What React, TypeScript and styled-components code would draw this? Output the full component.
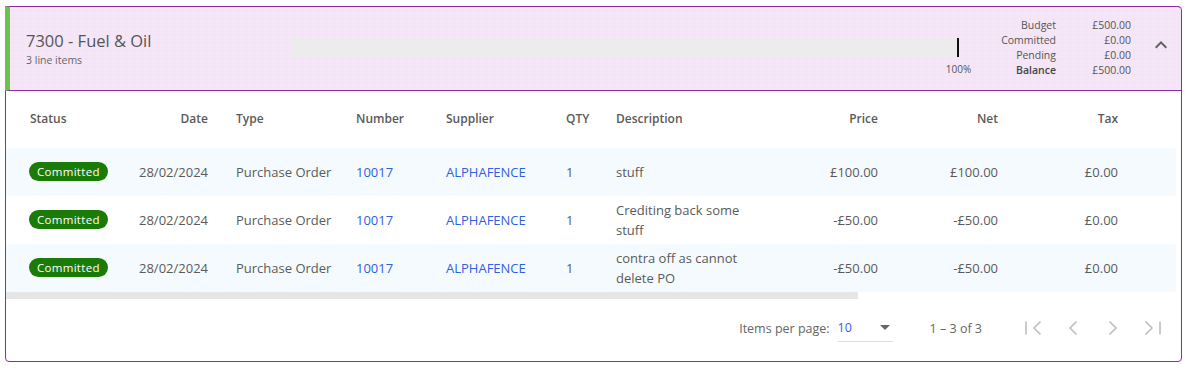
import { createGlobalStyle, styled } from 'styled-components';

const GlobalStyle = createGlobalStyle`
  body {
    margin: 0;
    background: #ffffff;
    font-family: 'Open Sans', 'Noto Sans', sans-serif;
    color: #555555;
  }
`;

type Line = {
  status: string;
  date: string;
  type: string;
  number: string;
  supplier: string;
  qty: number;
  description: string;
  price: string;
  net: string;
  tax: string;
};

const LINES: Line[] = [
  {
    status: 'Committed',
    date: '28/02/2024',
    type: 'Purchase Order',
    number: '10017',
    supplier: 'ALPHAFENCE',
    qty: 1,
    description: 'stuff',
    price: '£100.00',
    net: '£100.00',
    tax: '£0.00',
  },
  {
    status: 'Committed',
    date: '28/02/2024',
    type: 'Purchase Order',
    number: '10017',
    supplier: 'ALPHAFENCE',
    qty: 1,
    description: 'Crediting back some stuff',
    price: '-£50.00',
    net: '-£50.00',
    tax: '£0.00',
  },
  {
    status: 'Committed',
    date: '28/02/2024',
    type: 'Purchase Order',
    number: '10017',
    supplier: 'ALPHAFENCE',
    qty: 1,
    description: 'contra off as cannot delete PO',
    price: '-£50.00',
    net: '-£50.00',
    tax: '£0.00',
  },
];

const TOTALS = [
  { label: 'Budget', value: '£500.00' },
  { label: 'Committed', value: '£0.00' },
  { label: 'Pending', value: '£0.00' },
  { label: 'Balance', value: '£500.00', strong: true },
];

const USED_PERCENT = 100;

export default function App() {
  return (
    <>
      <GlobalStyle />
      <StyledPage>
        <StyledCard>
          <StyledHeader>
            <StyledTitleBlock>
              <StyledTitle>7300 - Fuel &amp; Oil</StyledTitle>
              <StyledSubtitle>{LINES.length} line items</StyledSubtitle>
            </StyledTitleBlock>
            <StyledProgress>
              <StyledTrack>
                <StyledMarker style={{ left: `${USED_PERCENT}%` }} />
                <StyledPercent style={{ left: `${USED_PERCENT}%` }}>
                  {USED_PERCENT}%
                </StyledPercent>
              </StyledTrack>
            </StyledProgress>
            <StyledTotals>
              {TOTALS.map((t) => (
                <StyledTotalRow key={t.label} $strong={!!t.strong}>
                  <span>{t.label}</span>
                  <span>{t.value}</span>
                </StyledTotalRow>
              ))}
            </StyledTotals>
            <StyledToggle aria-label="Collapse">
              <svg width="24" height="24" viewBox="0 0 24 24">
                <path d="M12 8l-6 6 1.41 1.41L12 10.83l4.59 4.58L18 14z" fill="#5f5f5f" />
              </svg>
            </StyledToggle>
          </StyledHeader>

          <StyledTableScroll>
            <StyledHeadRow>
              <StyledCell>Status</StyledCell>
              <StyledCell $align="right">Date</StyledCell>
              <StyledCell>Type</StyledCell>
              <StyledCell>Number</StyledCell>
              <StyledCell>Supplier</StyledCell>
              <StyledCell>QTY</StyledCell>
              <StyledCell>Description</StyledCell>
              <StyledCell $align="right">Price</StyledCell>
              <StyledCell $align="right">Net</StyledCell>
              <StyledCell $align="right">Tax</StyledCell>
            </StyledHeadRow>
            {LINES.map((line, i) => (
              <StyledRow key={i} $striped={i % 2 === 0}>
                <StyledCell>
                  <StyledBadge>{line.status}</StyledBadge>
                </StyledCell>
                <StyledCell $align="right">{line.date}</StyledCell>
                <StyledCell>{line.type}</StyledCell>
                <StyledCell>
                  <StyledLink>{line.number}</StyledLink>
                </StyledCell>
                <StyledCell>
                  <StyledLink>{line.supplier}</StyledLink>
                </StyledCell>
                <StyledCell>{line.qty}</StyledCell>
                <StyledDescription>{line.description}</StyledDescription>
                <StyledCell $align="right">{line.price}</StyledCell>
                <StyledCell $align="right">{line.net}</StyledCell>
                <StyledCell $align="right">{line.tax}</StyledCell>
              </StyledRow>
            ))}
          </StyledTableScroll>
          <StyledScrollbar>
            <StyledScrollThumb />
          </StyledScrollbar>

          <StyledPaginator>
            <StyledPagerLabel>Items per page:</StyledPagerLabel>
            <StyledSelect>
              <span>10</span>
              <StyledCaret />
            </StyledSelect>
            <StyledRange>1 – 3 of 3</StyledRange>
            <StyledPagerButtons>
              <StyledPagerButton aria-label="First page" disabled>
                <svg width="24" height="24" viewBox="0 0 24 24">
                  <path d="M5 5.5v13M19.5 5.5L13 12l6.5 6.5" />
                </svg>
              </StyledPagerButton>
              <StyledPagerButton aria-label="Previous page" disabled>
                <svg width="24" height="24" viewBox="0 0 24 24">
                  <path d="M15.5 5.5L9 12l6.5 6.5" />
                </svg>
              </StyledPagerButton>
              <StyledPagerButton aria-label="Next page" disabled>
                <svg width="24" height="24" viewBox="0 0 24 24">
                  <path d="M8.5 5.5L15 12l-6.5 6.5" />
                </svg>
              </StyledPagerButton>
              <StyledPagerButton aria-label="Last page" disabled>
                <svg width="24" height="24" viewBox="0 0 24 24">
                  <path d="M4.5 5.5L11 12l-6.5 6.5M19 5.5v13" />
                </svg>
              </StyledPagerButton>
            </StyledPagerButtons>
          </StyledPaginator>
        </StyledCard>
      </StyledPage>
    </>
  );
}

const PURPLE = '#8e2aa8';
const COLUMNS = '90px 116px 120px 90px 120px 50px 150px 112px 120px 120px';

const StyledPage = styled.div`
  padding: 6px 6px 6px 5px;
`;

const StyledCard = styled.div`
  border: 1px solid ${PURPLE};
  border-radius: 0 4px 4px 4px;
  background: #ffffff;
`;

const StyledHeader = styled.div`
  display: flex;
  align-items: center;
  height: 83px;
  margin: -1px 0 0 -1px;
  border-top: 1px solid ${PURPLE};
  border-bottom: 1px solid ${PURPLE};
  border-left: 5px solid #6cc24a;
  border-top-right-radius: 4px;
  background-color: #f4e6f6;
  background-image: radial-gradient(circle, #e9d6ed 0.6px, transparent 0.8px);
  background-size: 8px 8px;
  padding-left: 16px;
  padding-right: 8px;
`;

const StyledTitleBlock = styled.div`
  flex: 0 0 265px;
  display: flex;
  flex-direction: column;
`;

const StyledTitle = styled.div`
  font-size: 16.5px;
  line-height: 22px;
  color: #555555;
`;

const StyledSubtitle = styled.div`
  font-size: 10.5px;
  line-height: 16px;
  color: #666666;
`;

const StyledProgress = styled.div`
  flex: 1;
  align-self: flex-start;
  margin-top: 31px;
  padding-right: 7px;
`;

const StyledTrack = styled.div`
  position: relative;
  height: 19px;
  background: #ececec;
`;

const StyledMarker = styled.div`
  position: absolute;
  top: 0;
  bottom: 0;
  width: 2px;
  background: #111111;
`;

const StyledPercent = styled.div`
  position: absolute;
  top: 24px;
  transform: translateX(-45%);
  font-size: 10px;
  line-height: 14px;
  color: #555555;
`;

const StyledTotals = styled.div`
  display: flex;
  flex-direction: column;
  margin-left: 37px;
  margin-top: -1px;
`;

const StyledTotalRow = styled.div<{ $strong: boolean }>`
  display: grid;
  grid-template-columns: auto 75px;
  font-size: 10.5px;
  line-height: 15px;
  color: #555555;

  span {
    text-align: right;
  }

  span:first-child {
    font-weight: ${(p) => (p.$strong ? 600 : 400)};
    color: ${(p) => (p.$strong ? '#444444' : '#555555')};
  }
`;

const StyledToggle = styled.button`
  display: flex;
  align-items: center;
  justify-content: center;
  width: 24px;
  height: 24px;
  padding: 0;
  margin-left: 18px;
  margin-top: -8px;
  border: none;
  background: none;
`;

const StyledTableScroll = styled.div`
  width: 1170px;
`;

const StyledHeadRow = styled.div`
  display: grid;
  grid-template-columns: ${COLUMNS};
  align-items: center;
  height: 57px;
  padding: 0 24px 3px;
  box-sizing: border-box;
  font-size: 12px;
  font-weight: 600;
  color: #5a5a5a;
`;

const StyledRow = styled.div<{ $striped: boolean }>`
  display: grid;
  grid-template-columns: ${COLUMNS};
  align-items: center;
  height: 48px;
  padding: 0 24px 1px;
  box-sizing: border-box;
  background: ${(p) => (p.$striped ? '#f5fafe' : '#ffffff')};
  font-size: 13px;
  color: #5a5a5a;
`;

const StyledCell = styled.div<{ $align?: 'left' | 'right' }>`
  text-align: ${(p) => p.$align ?? 'left'};
  padding-right: ${(p) => (p.$align === 'right' ? '0' : '8px')};
  white-space: nowrap;

  &:nth-child(2) {
    padding-right: 28px;
  }
`;

const StyledDescription = styled.div`
  max-width: 140px;
  line-height: 20px;
`;

const StyledLink = styled.span`
  color: #2f5fe0;
`;

const StyledBadge = styled.span`
  display: inline-block;
  margin-left: -1px;
  padding: 0 8px;
  height: 19px;
  line-height: 19px;
  border-radius: 10px;
  background: #1b7b07;
  color: #ffffff;
  font-size: 11.5px;
  letter-spacing: 0.3px;
`;

const StyledScrollbar = styled.div`
  height: 7px;
  background: #ffffff;
`;

const StyledScrollThumb = styled.div`
  width: 852px;
  height: 100%;
  background: #e6e6e6;
`;

const StyledPaginator = styled.div`
  display: flex;
  align-items: center;
  justify-content: flex-end;
  height: 62px;
  padding: 0 16px 4px 0;
  box-sizing: border-box;
  font-size: 12.5px;
  color: #666666;
`;

const StyledPagerLabel = styled.span`
  margin-right: 8px;
`;

const StyledSelect = styled.div`
  display: flex;
  align-items: center;
  justify-content: space-between;
  width: 55px;
  height: 24px;
  margin-top: 4px;
  border-bottom: 1px solid #dddddd;
  color: #2f5fe0;
  box-sizing: border-box;
  padding-bottom: 4px;
`;

const StyledCaret = styled.span`
  width: 0;
  height: 0;
  margin-right: 3px;
  border-left: 5px solid transparent;
  border-right: 5px solid transparent;
  border-top: 5px solid #666666;
`;

const StyledRange = styled.span`
  margin: 0 39px 0 37px;
`;

const StyledPagerButtons = styled.div`
  display: flex;
  gap: 16px;
`;

const StyledPagerButton = styled.button`
  display: flex;
  align-items: center;
  justify-content: center;
  width: 24px;
  height: 24px;
  padding: 0;
  border: none;
  background: none;

  svg path {
    fill: none;
    stroke: #bdbdbd;
    stroke-width: 1.6;
  }
`;
